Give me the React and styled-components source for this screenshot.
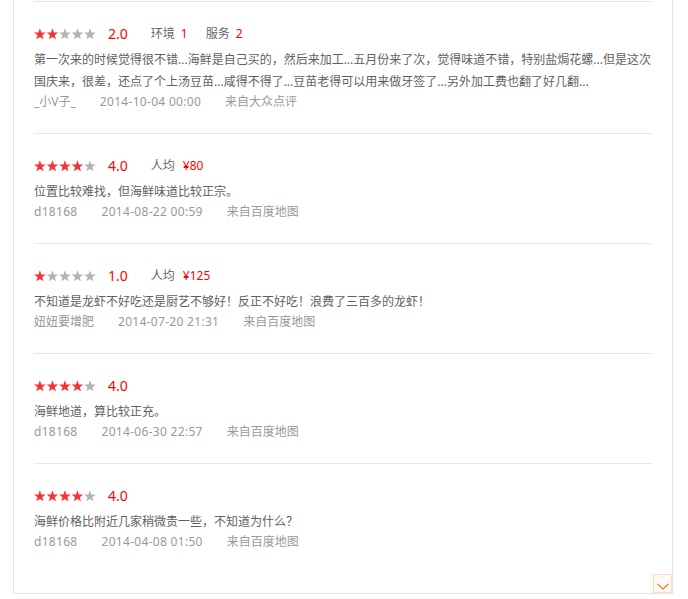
import React from 'react';
import styled, { createGlobalStyle } from 'styled-components';

const Global = createGlobalStyle`
  html, body { margin: 0; padding: 0; background: #fff; }
  body { font-family: "Noto Sans", "Noto Sans CJK SC", sans-serif; }
`;

const Panel = styled.div`
  position: relative;
  box-sizing: border-box;
  margin-left: 13px;
  width: 660px;
  border: 1px solid #e6e6e6;
  border-top: none;
  padding: 1px 0 20px;
`;

const Item = styled.div`
  border-top: 1px solid #e8e8e8;
  margin: 0 20px;
  padding: 22px 0 20px;
`;

const RatingRow = styled.div`
  display: flex;
  align-items: center;
  height: 20px;
  margin-bottom: 5px;
`;

const Score = styled.span`
  margin-left: 12px;
  font-size: 14px;
  color: #ff0000;
  line-height: 20px;
`;

const Label = styled.span`
  margin-left: ${(p) => (p.$first ? '23px' : '18px')};
  font-size: 12px;
  color: #666;
  line-height: 20px;
`;

const Val = styled.span`
  margin-left: ${(p) => (p.$price ? '8px' : '6px')};
  color: #ff0000;
`;

const Text = styled.div`
  font-size: 12px;
  line-height: 22px;
  color: #5f5f5f;
`;

const Line = styled.div`
  white-space: nowrap;
`;

const Meta = styled.div`
  display: flex;
  margin-top: -2px;
  font-size: 12px;
  line-height: 22px;
  color: #999;
`;

const MetaField = styled.span`
  margin-right: 24px;
  letter-spacing: ${(p) => (p.$num ? '0.3px' : '0')};
`;

const ScrollBtn = styled.div`
  position: absolute;
  right: 0;
  bottom: 0;
  box-sizing: border-box;
  width: 19px;
  height: 19px;
  border: 1px solid #fbdcc4;
  background: #fffaf6;
  display: flex;
  align-items: center;
  justify-content: center;
  padding-top: 5px;
`;

const starPts = (cx, cy, R, r) => {
  const pts = [];
  for (let i = 0; i < 10; i++) {
    const rad = i % 2 === 0 ? R : r;
    const a = (Math.PI / 5) * i - Math.PI / 2;
    pts.push(`${(cx + rad * Math.cos(a)).toFixed(2)},${(cy + rad * Math.sin(a)).toFixed(2)}`);
  }
  return pts.join(' ');
};

const Stars = ({ n }) => (
  <svg width="62" height="12" viewBox="0 0 62 12">
    {[0, 1, 2, 3, 4].map((i) => (
      <polygon
        key={i}
        points={starPts(5.9 + i * 12.5, 6.4, 6.1, 2.5)}
        fill={i < n ? '#f53535' : '#b3b3b3'}
      />
    ))}
  </svg>
);

const reviews = [
  {
    stars: 2,
    score: '2.0',
    extras: [
      { label: '环境', val: '1' },
      { label: '服务', val: '2' },
    ],
    lines: [
      '第一次来的时候觉得很不错...海鲜是自己买的，然后来加工...五月份来了次，觉得味道不错，特别盐焗花螺...但是这次',
      '国庆来，很差，还点了个上汤豆苗...咸得不得了...豆苗老得可以用来做牙签了...另外加工费也翻了好几翻...',
    ],
    user: '_小V子_',
    date: '2014-10-04 00:00',
    src: '来自大众点评',
  },
  {
    stars: 4,
    score: '4.0',
    extras: [{ label: '人均', val: '¥80', price: true }],
    lines: ['位置比较难找，但海鲜味道比较正宗。'],
    user: 'd18168',
    date: '2014-08-22 00:59',
    src: '来自百度地图',
  },
  {
    stars: 1,
    score: '1.0',
    extras: [{ label: '人均', val: '¥125', price: true }],
    lines: ['不知道是龙虾不好吃还是厨艺不够好！反正不好吃！浪费了三百多的龙虾！'],
    user: '妞妞要增肥',
    date: '2014-07-20 21:31',
    src: '来自百度地图',
  },
  {
    stars: 4,
    score: '4.0',
    extras: [],
    lines: ['海鲜地道，算比较正充。'],
    user: 'd18168',
    date: '2014-06-30 22:57',
    src: '来自百度地图',
  },
  {
    stars: 4,
    score: '4.0',
    extras: [],
    lines: ['海鲜价格比附近几家稍微贵一些，不知道为什么？'],
    user: 'd18168',
    date: '2014-04-08 01:50',
    src: '来自百度地图',
  },
];

export default function App() {
  return (
    <>
      <Global />
      <Panel>
        {reviews.map((r, idx) => (
          <Item key={idx}>
            <RatingRow>
              <Stars n={r.stars} />
              <Score>{r.score}</Score>
              {r.extras.map((e, i) => (
                <Label key={i} $first={i === 0}>
                  {e.label}
                  <Val $price={e.price}>{e.val}</Val>
                </Label>
              ))}
            </RatingRow>
            <Text>
              {r.lines.map((l, i) => (
                <Line key={i}>{l}</Line>
              ))}
            </Text>
            <Meta>
              <MetaField $num={/^d\d/.test(r.user)}>{r.user}</MetaField>
              <MetaField $num>{r.date}</MetaField>
              <MetaField>{r.src}</MetaField>
            </Meta>
          </Item>
        ))}
        <ScrollBtn>
          <svg width="12" height="7" viewBox="0 0 12 7">
            <polyline points="0.5,0.8 6,6 11.5,0.8" fill="none" stroke="#ff6a00" strokeWidth="1.1" />
          </svg>
        </ScrollBtn>
      </Panel>
    </>
  );
}
